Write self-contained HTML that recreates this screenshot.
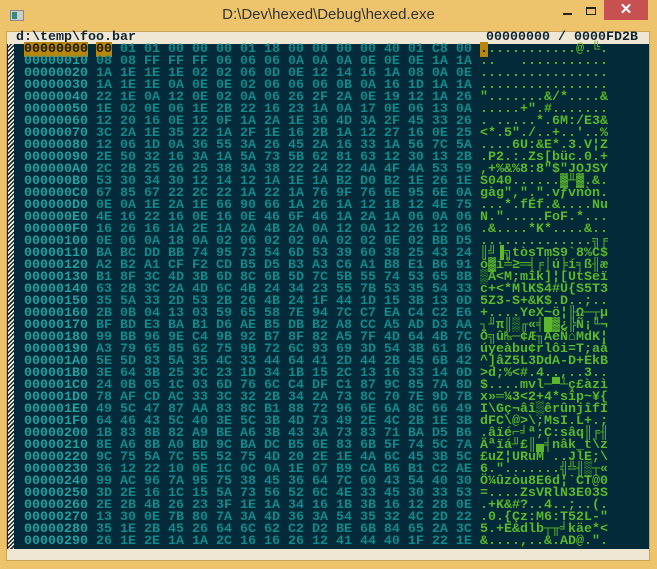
<!DOCTYPE html>
<html><head><meta charset="utf-8"><style>
*{margin:0;padding:0;box-sizing:border-box}
body{width:657px;height:569px;background:#EDC46B;position:relative;overflow:hidden;font-family:"Liberation Mono","DejaVu Sans Mono",monospace}
.title{position:absolute;top:6px;left:0;width:657px;text-align:center;font:15px "Liberation Sans",sans-serif;color:#333}
.ico{position:absolute;left:10px;top:10px;width:14px;height:11px;background:#ccc;border:1px solid #888}
.ico:before{content:"";position:absolute;left:1px;top:1px;width:5px;height:7px;background:#3a8a7a}
.btn{position:absolute;top:0;height:20px}
.close{left:604px;width:44px;background:#C75050;color:#fff;text-align:center;font:bold 15px "Liberation Sans",sans-serif;line-height:20px}
.client{position:absolute;left:6px;top:31px;width:644px;height:530px;background:#EFE7D4;border:1px solid #C9A452}
.hdr{position:absolute;top:32px;height:12px;font-size:13.33px;font-weight:bold;line-height:12px;color:#102430;white-space:pre}
.dark{position:absolute;left:7px;top:44px;width:642px;height:505px;background:#022A38}
.hatch{position:absolute;left:8px;top:44px;width:6px;height:505px;background:repeating-linear-gradient(135deg,#fff 0 1.5px,#222 1.5px 3px)}
.r{position:absolute;left:0;height:12px;font-size:13.33px;font-weight:bold;line-height:12px;white-space:pre}
.a{position:absolute;left:24px;color:#23A0A0}
.h{position:absolute;left:96px;color:#108A8C}
.s{position:absolute;left:480px;color:#5CB82A}
.hl{background:#B8860B;color:#1a1a00}
</style></head><body>
<div class="ico"></div>
<div class="title">D:\Dev\hexed\Debug\hexed.exe</div>
<div style="position:absolute;left:563px;top:13px;width:9px;height:2px;background:#222"></div>
<div style="position:absolute;left:586px;top:7px;width:10px;height:8px;border:1px solid #222;border-top-width:2px"></div>
<div class="btn close">✕</div>
<div class="client"></div>
<div class="hdr" style="left:16px">d:\temp\foo.bar</div>
<div class="hdr" style="left:486px">00000000 / 0000FD2B</div>
<div class="dark"></div>
<div class="hatch"></div>
<div id="rows">
<div class="r" style="top:44px"><span class="a"><span class="hl">00000000</span></span><span class="h"><span class="hl">00</span> 01 01 00 00 00 01 18 00 00 00 00 40 01 C8 00</span><span class="s"><span class="hl">.</span>...........@.╚.</span></div>
<div class="r" style="top:56px"><span class="a">00000010</span><span class="h">08 08 FF FF FF 06 06 06 0A 0A 0A 0E 0E 0E 1A 1A</span><span class="s">..   ...........</span></div>
<div class="r" style="top:68px"><span class="a">00000020</span><span class="h">1A 1E 1E 1E 02 02 06 0D 0E 12 14 16 1A 08 0A 0E</span><span class="s">................</span></div>
<div class="r" style="top:80px"><span class="a">00000030</span><span class="h">1A 1E 1E 0A 0E 0E 02 06 06 06 0B 0A 16 1D 1A 1A</span><span class="s">................</span></div>
<div class="r" style="top:92px"><span class="a">00000040</span><span class="h">22 1E 0A 12 0E 02 0A 06 26 2F 2A 0E 19 12 1A 26</span><span class="s">".......&amp;/*....&amp;</span></div>
<div class="r" style="top:104px"><span class="a">00000050</span><span class="h">1E 02 0E 06 1E 2B 22 16 23 1A 0A 17 0E 06 13 0A</span><span class="s">.....+".#.......</span></div>
<div class="r" style="top:116px"><span class="a">00000060</span><span class="h">12 20 16 0E 12 0F 1A 2A 1E 36 4D 3A 2F 45 33 26</span><span class="s">. .....*.6M:/E3&amp;</span></div>
<div class="r" style="top:128px"><span class="a">00000070</span><span class="h">3C 2A 1E 35 22 1A 2F 1E 16 2B 1A 12 27 16 0E 25</span><span class="s">&lt;*.5"./..+..'..%</span></div>
<div class="r" style="top:140px"><span class="a">00000080</span><span class="h">12 06 1D 0A 36 55 3A 26 45 2A 16 33 1A 56 7C 5A</span><span class="s">....6U:&amp;E*.3.V¦Z</span></div>
<div class="r" style="top:152px"><span class="a">00000090</span><span class="h">2E 50 32 16 3A 1A 5A 73 5B 62 81 63 12 30 13 2B</span><span class="s">.P2.:.Zs[büc.0.+</span></div>
<div class="r" style="top:164px"><span class="a">000000A0</span><span class="h">2C 2B 25 26 25 38 3A 38 22 24 22 4A 4F 4A 53 59</span><span class="s">,+%&amp;%8:8"$"JOJSY</span></div>
<div class="r" style="top:176px"><span class="a">000000B0</span><span class="h">53 30 34 30 12 14 12 1A 1E 1A B2 D0 B2 1E 26 1E</span><span class="s">S040......▓╨▓.&amp;.</span></div>
<div class="r" style="top:188px"><span class="a">000000C0</span><span class="h">67 85 67 22 2C 22 1A 22 1A 76 9F 76 6E 95 6E 0A</span><span class="s">gàg",".".vƒvnòn.</span></div>
<div class="r" style="top:200px"><span class="a">000000D0</span><span class="h">0E 0A 1E 2A 1E 66 90 66 1A 26 1A 12 1B 12 4E 75</span><span class="s">...*.fÉf.&amp;....Nu</span></div>
<div class="r" style="top:212px"><span class="a">000000E0</span><span class="h">4E 16 22 16 0E 16 0E 46 6F 46 1A 2A 1A 06 0A 06</span><span class="s">N.".....FoF.*...</span></div>
<div class="r" style="top:224px"><span class="a">000000F0</span><span class="h">16 26 16 1A 2E 1A 2A 4B 2A 0A 12 0A 12 26 12 06</span><span class="s">.&amp;....*K*....&amp;..</span></div>
<div class="r" style="top:236px"><span class="a">00000100</span><span class="h">0E 06 0A 18 0A 02 06 02 02 0A 02 02 0E 02 BB D5</span><span class="s">..............╗╒</span></div>
<div class="r" style="top:248px"><span class="a">00000110</span><span class="h">BA BC DD BB 74 95 73 54 6D 53 39 60 38 25 43 24</span><span class="s">║╝▐╗tòsTmS9`8%C$</span></div>
<div class="r" style="top:260px"><span class="a">00000120</span><span class="h">A2 B2 A1 CF F2 CD B5 D5 B3 A3 C6 A1 B8 E1 B6 91</span><span class="s">ó▓í╧≥═╡╒│ú╞í╕ß╢æ</span></div>
<div class="r" style="top:272px"><span class="a">00000130</span><span class="h">B1 8F 3C 4D 3B 6D 8C 6B 5D 7C 5B 55 74 53 65 8B</span><span class="s">▒Å&lt;M;mîk]¦[UtSeï</span></div>
<div class="r" style="top:284px"><span class="a">00000140</span><span class="h">63 2B 3C 2A 4D 6C 4B 24 34 23 55 7B 53 35 54 33</span><span class="s">c+&lt;*MlK$4#U{S5T3</span></div>
<div class="r" style="top:296px"><span class="a">00000150</span><span class="h">35 5A 33 2D 53 2B 26 4B 24 1F 44 1D 15 3B 13 0D</span><span class="s">5Z3-S+&amp;K$.D..;..</span></div>
<div class="r" style="top:308px"><span class="a">00000160</span><span class="h">2B 0B 04 13 03 59 65 58 7E 94 7C C7 EA C4 C2 E6</span><span class="s">+....YeX~ö¦╟Ω─┬µ</span></div>
<div class="r" style="top:320px"><span class="a">00000170</span><span class="h">BF BD E3 BA B1 D6 AE B5 DB B2 A8 CC A5 AD D3 AA</span><span class="s">┐╜π║▒╓«╡█▓¿╠Ñ¡╙¬</span></div>
<div class="r" style="top:332px"><span class="a">00000180</span><span class="h">99 BB 96 9E C4 9B 92 B7 8F 82 A5 7F 4D 64 4B 7C</span><span class="s">Ö╗û₧─¢Æ╖ÅéÑ⌂MdK¦</span></div>
<div class="r" style="top:344px"><span class="a">00000190</span><span class="h">A3 79 65 85 62 75 9B 72 6C 93 69 3D 54 3B 61 86</span><span class="s">úyeàbu¢rlôi=T;aå</span></div>
<div class="r" style="top:356px"><span class="a">000001A0</span><span class="h">5E 5D 83 5A 35 4C 33 44 64 41 2D 44 2B 45 6B 42</span><span class="s">^]âZ5L3DdA-D+EkB</span></div>
<div class="r" style="top:368px"><span class="a">000001B0</span><span class="h">3E 64 3B 25 3C 23 1D 34 1B 15 2C 13 16 33 14 0D</span><span class="s">&gt;d;%&lt;#.4..,..3..</span></div>
<div class="r" style="top:380px"><span class="a">000001C0</span><span class="h">24 0B 05 1C 03 6D 76 6C C4 DF C1 87 9C 85 7A 8D</span><span class="s">$....mvl─▀┴ç£àzì</span></div>
<div class="r" style="top:392px"><span class="a">000001D0</span><span class="h">78 AF CD AC 33 3C 32 2B 34 2A 73 8C 70 7E 9D 7B</span><span class="s">x»═¼3&lt;2+4*sîp~¥{</span></div>
<div class="r" style="top:404px"><span class="a">000001E0</span><span class="h">49 5C 47 87 AA 83 8C B1 88 72 96 6E 6A 8C 66 49</span><span class="s">I\Gç¬âî▒êrûnjîfI</span></div>
<div class="r" style="top:416px"><span class="a">000001F0</span><span class="h">64 46 43 5C 40 3E 5C 3B 4D 73 49 2E 4C 2B 1E 3B</span><span class="s">dFC\@&gt;\;MsI.L+.;</span></div>
<div class="r" style="top:428px"><span class="a">00000200</span><span class="h">1B 83 8B 82 A9 BE A6 3B 43 3A 73 83 71 BA D5 B6</span><span class="s">.âïé⌐╛ª;C:sâq║╒╢</span></div>
<div class="r" style="top:440px"><span class="a">00000210</span><span class="h">8E A6 8B A0 BD 9C BA DC B5 6E 83 6B 5F 74 5C 7A</span><span class="s">Äªïá╜£║▄╡nâk_t\z</span></div>
<div class="r" style="top:452px"><span class="a">00000220</span><span class="h">9C 75 5A 7C 55 52 75 4D 20 2E 1E 4A 6C 45 3B 5C</span><span class="s">£uZ¦URuM ..JlE;\</span></div>
<div class="r" style="top:464px"><span class="a">00000230</span><span class="h">36 12 22 10 0E 1C 0C 0A 1E 07 B9 CA B6 B1 C2 AE</span><span class="s">6.".......╣╩╢▒┬«</span></div>
<div class="r" style="top:476px"><span class="a">00000240</span><span class="h">99 AC 96 7A 95 75 38 45 36 64 7C 60 43 54 40 30</span><span class="s">Ö¼ûzòu8E6d¦`CT@0</span></div>
<div class="r" style="top:488px"><span class="a">00000250</span><span class="h">3D 2E 16 1C 15 5A 73 56 52 6C 4E 33 45 30 33 53</span><span class="s">=....ZsVRlN3E03S</span></div>
<div class="r" style="top:500px"><span class="a">00000260</span><span class="h">2E 2B 4B 26 23 3F 1E 1A 34 16 1B 3B 16 12 28 0E</span><span class="s">.+K&amp;#?..4..;..(.</span></div>
<div class="r" style="top:512px"><span class="a">00000270</span><span class="h">13 30 0E 7B 80 7A 3A 4D 36 3A 54 35 32 4C 2D 22</span><span class="s">.0.{Çz:M6:T52L-"</span></div>
<div class="r" style="top:524px"><span class="a">00000280</span><span class="h">35 1E 2B 45 26 64 6C 62 C2 D2 BE 6B 84 65 2A 3C</span><span class="s">5.+E&amp;dlb┬╥╛käe*&lt;</span></div>
<div class="r" style="top:536px"><span class="a">00000290</span><span class="h">26 1E 2E 1A 1A 2C 16 16 26 12 41 44 40 1F 22 1E</span><span class="s">&amp;....,..&amp;.AD@.".</span></div>
</div>
</body></html>
